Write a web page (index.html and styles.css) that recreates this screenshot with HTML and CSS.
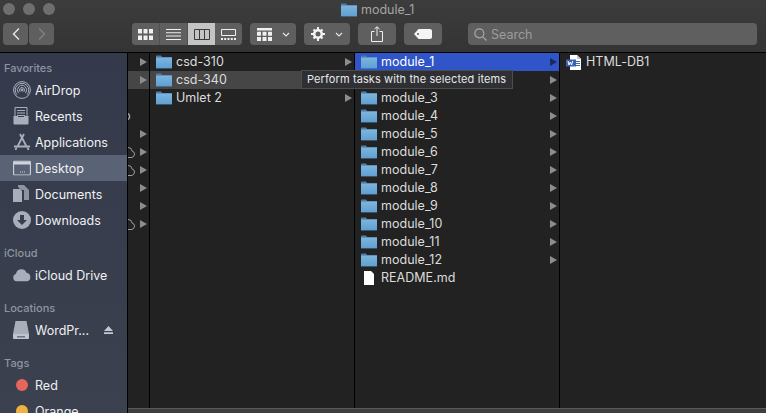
FILE: index.html
```html
<!DOCTYPE html>
<html lang="en">
<head>
    <meta charset="UTF-8">
    <title>module_1</title>
    <link rel="stylesheet" href="styles.css">
</head>
<body>
    <svg class="defs" width="0" height="0">
        <defs>
            <linearGradient id="blue" x1="0" y1="0" x2="0" y2="1">
                <stop offset="0" stop-color="#7db5de"/>
                <stop offset="1" stop-color="#5f9fd2"/>
            </linearGradient>
            <symbol id="folder" viewBox="0 0 16 14">
                <path d="M0 1.200Q0 .4.8.4H5L6.200 2H16V3H0Z" fill="#4c7ea8"/>
                <path d="M0 2.600H16V13.400H0Z" fill="url(#blue)"/>
            </symbol>
            <symbol id="stub-cloud" viewBox="0 0 7 11">
                <path d="M0 .5q4 0 4 3.500 2.500.5 2.500 3T4 10.500H0" fill="none" stroke="#9a9a9a"/>
            </symbol>
        </defs>
    </svg>

    <header class="toolbar">
        <div class="title-row">
            <div class="lights"><i></i><i></i><i></i></div>
            <div class="title">
                <svg class="title-folder" width="16" height="14"><use href="#folder"/></svg>
                <span>module_1</span>
            </div>
        </div>
        <div class="tool-row">
            <div class="nav">
                <button class="btn nav-btn">
                    <svg width="10" height="14" viewBox="0 0 10 14"><path d="M8 1.500 2.500 7 8 12.500" fill="none" stroke="#e4e4e4" stroke-width="1.500"/></svg>
                </button>
                <button class="btn nav-btn">
                    <svg width="10" height="14" viewBox="0 0 10 14"><path d="M2 1.500 7.500 7 2 12.500" fill="none" stroke="#808080" stroke-width="1.500"/></svg>
                </button>
            </div>
            <div class="views">
                <button class="view">
                    <svg width="15" height="11" viewBox="0 0 15 11" fill="#f0f0f0"><path d="M0 0h4v4.500H0zM5.500 0h4v4.500h-4zM11 0h4v4.500h-4zM0 6.500h4V11H0zM5.500 6.500h4V11h-4zM11 6.500h4V11h-4z"/></svg>
                </button>
                <button class="view">
                    <svg width="15" height="11" viewBox="0 0 15 11" fill="#f0f0f0"><path d="M0 0h15v1H0zM0 3.300h15v1H0zM0 6.600h15v1H0zM0 10h15v1H0z"/></svg>
                </button>
                <button class="view view-on">
                    <svg width="16" height="11" viewBox="0 0 16 11" fill="none" stroke="#3a3a3a"><path d="M.5.500h15v10H.5zM5.500.500v10M10.500.500v10"/></svg>
                </button>
                <button class="view">
                    <svg width="15" height="11" viewBox="0 0 15 11"><path d="M.5.500h14v6H.5z" fill="none" stroke="#f0f0f0"/><path d="M0 9h2v2H0zM3.200 9h2v2h-2zM6.500 9h2v2h-2zM9.800 9h2v2h-2zM13 9h2v2h-2z" fill="#f0f0f0"/></svg>
                </button>
            </div>
            <button class="btn drop arrange">
                <svg width="15" height="13" viewBox="0 0 15 13" fill="#f0f0f0"><path d="M0 0h15v2.500H0zM0 3.800h4v4H0zM5.500 3.800h4v4h-4zM11 3.800h4v4h-4zM0 9h4v4H0zM5.500 9h4v4h-4zM11 9h4v4h-4z"/></svg>
                <svg class="caret" width="8" height="5" viewBox="0 0 8 5"><path d="M1 1l3 3 3-3" fill="none" stroke="#e4e4e4" stroke-width="1.200"/></svg>
            </button>
            <button class="btn drop action">
                <svg width="14" height="14" viewBox="0 0 14 14"><circle cx="7" cy="7" r="3.800" fill="none" stroke="#f4f4f4" stroke-width="2.600"/><path d="M6 0h2v3H6zM6 11h2v3H6zM0 6h3v2H0zM11 6h3v2h-3zM1.800 3.200 3.200 1.800 5 3.600 3.600 5zM9 10.400 10.400 9l1.800 1.800-1.400 1.400zM10.800 1.800l1.400 1.400L10.400 5 9 3.600zM3.600 9 5 10.400l-1.800 1.800-1.400-1.400z" fill="#f4f4f4"/><circle cx="7" cy="7" r="2" fill="#5f5f5f"/></svg>
                <svg class="caret" width="8" height="5" viewBox="0 0 8 5"><path d="M1 1l3 3 3-3" fill="none" stroke="#e4e4e4" stroke-width="1.200"/></svg>
            </button>
            <button class="btn share">
                <svg width="12" height="16" viewBox="0 0 12 16" fill="none" stroke="#f0f0f0"><path d="M3.500 5.500H.5v10h11v-10h-3M6 10V.8M3.500 3 6 .8 8.500 3"/></svg>
            </button>
            <button class="btn tag">
                <svg width="18" height="10" viewBox="0 0 18 10"><path d="M4.500 0H16a2 2 0 0 1 2 2v6a2 2 0 0 1-2 2H4.500L0 5Z" fill="#f4f4f4"/><circle cx="4" cy="5" r="1" fill="#5f5f5f"/></svg>
            </button>
            <div class="search">
                <svg width="13" height="13" viewBox="0 0 13 13" fill="none" stroke="#a8a8a8" stroke-width="1.200"><circle cx="5.300" cy="5.300" r="4.500"/><path d="M8.600 8.600 12.500 12.500"/></svg>
                <span>Search</span>
            </div>
        </div>
    </header>

    <div class="body">
        <nav class="sidebar">
            <h4>Favorites</h4>
            <div class="side-item">
                <svg class="side-icon" width="18" height="18" viewBox="0 0 18 18" fill="none" stroke="#a9afba"><circle cx="9" cy="9" r="8.400"/><path d="M3.800 13.500a6.800 6.800 0 1 1 10.400 0M5.500 12a4.600 4.600 0 1 1 7 0M7.200 10.800a2.500 2.500 0 1 1 3.600 0"/><circle cx="9" cy="9" r="1" fill="#a9afba"/></svg>
                <span>AirDrop</span>
            </div>
            <div class="side-item">
                <svg class="side-icon" width="16" height="18" viewBox="0 0 16 18"><path d="M2 .5h12v10H2z" fill="none" stroke="#a9afba"/><path d="M4 3h8v1H4zM4 5.500h8v1H4zM4 8h8v1H4z" fill="#a9afba"/><path d="M.5 9H5v2h6V9h4.500v7.500a1 1 0 0 1-1 1h-13a1 1 0 0 1-1-1z" fill="#a9afba"/></svg>
                <span>Recents</span>
            </div>
            <div class="side-item">
                <svg class="side-icon" width="18" height="18" viewBox="0 0 18 18" fill="none" stroke="#a9afba" stroke-width="1.800"><path d="M7 1 13.500 13.500M11 1 4.500 13.500M1 13.500H17"/><path d="M3.500 14.500 2.500 17M14.500 14.500 15.500 17"/></svg>
                <span>Applications</span>
            </div>
            <div class="side-item side-on">
                <svg class="side-icon" width="18" height="15" viewBox="0 0 18 15"><path d="M.6 1.500q0-1 1-1h14.800q1 0 1 1v12q0 1-1 1H1.600q-1 0-1-1z" fill="none" stroke="#d0d4dc" stroke-width="1.100"/><path d="M1 1h16v3H1z" fill="#d0d4dc"/><path d="M7 11h1v1H7zM9 11h1v1H9zM11 11h1v1h-1z" fill="#d0d4dc"/></svg>
                <span>Desktop</span>
            </div>
            <div class="side-item">
                <svg class="side-icon" width="16" height="18" viewBox="0 0 16 18"><path d="M0 4h7l2 2v11H0z" fill="#a9afba"/><path d="M5 0h6l5 5v10h-5V5H8L5 2z" fill="#8d93a0"/></svg>
                <span>Documents</span>
            </div>
            <div class="side-item">
                <svg class="side-icon" width="18" height="18" viewBox="0 0 18 18"><circle cx="9" cy="9" r="9" fill="#a9afba"/><path d="M7 4h4v5h3l-5 5-5-5h3z" fill="#3a404e"/></svg>
                <span>Downloads</span>
            </div>
            <h4 class="gap">iCloud</h4>
            <div class="side-item">
                <svg class="side-icon" width="18" height="13" viewBox="0 0 18 13"><path d="M4 13a4 4 0 0 1-1-7.800 5.500 5.500 0 0 1 10.500-1A4.500 4.500 0 0 1 14 13z" fill="#a9afba"/></svg>
                <span>iCloud Drive</span>
            </div>
            <h4 class="gap">Locations</h4>
            <div class="side-item">
                <svg class="side-icon" width="16" height="18" viewBox="0 0 16 18"><path d="M2.500 0h11L16 13H0z" fill="#a9afba"/><path d="M0 13h16v4a1 1 0 0 1-1 1H1a1 1 0 0 1-1-1z" fill="#bfc4cd"/><path d="M4 15h8v1.500H4z" fill="#6d7380"/></svg>
                <span>WordPr...</span>
                <svg class="eject" width="9" height="8" viewBox="0 0 9 8" fill="#c3c7cf"><path d="M4.500 0 9 5H0zM0 6.300h9V8H0z"/></svg>
            </div>
            <h4 class="gap">Tags</h4>
            <div class="side-item">
                <i class="tag-dot dot-red"></i>
                <span>Red</span>
            </div>
            <div class="side-item">
                <i class="tag-dot dot-orange"></i>
                <span>Orange</span>
            </div>
        </nav>

        <main class="browser">
            <div class="columns">
                <div class="col col-stub">
                    <div class="row"><b class="arrow"></b></div>
                    <div class="row row-parent"><b class="arrow"></b></div>
                    <div class="row"></div>
                    <div class="row"><span class="stub-p">p</span></div>
                    <div class="row"><b class="arrow"></b></div>
                    <div class="row"><svg class="stub-cloud" width="7" height="11"><use href="#stub-cloud"/></svg><b class="arrow"></b></div>
                    <div class="row"><svg class="stub-cloud" width="7" height="11"><use href="#stub-cloud"/></svg><b class="arrow"></b></div>
                    <div class="row"><b class="arrow"></b></div>
                    <div class="row"><b class="arrow"></b></div>
                    <div class="row"><svg class="stub-cloud" width="7" height="11"><use href="#stub-cloud"/></svg><b class="arrow"></b></div>
                </div>
                <div class="col col-wide">
                    <div class="row"><svg class="row-icon" width="16" height="14"><use href="#folder"/></svg><span>csd-310</span><b class="arrow"></b></div>
                    <div class="row row-parent"><svg class="row-icon" width="16" height="14"><use href="#folder"/></svg><span>csd-340</span><b class="arrow"></b></div>
                    <div class="row"><svg class="row-icon" width="16" height="14"><use href="#folder"/></svg><span>Umlet 2</span><b class="arrow"></b></div>
                </div>
                <div class="col col-wide">
                    <div class="row row-sel"><svg class="row-icon" width="16" height="14"><use href="#folder"/></svg><span>module_1</span><b class="arrow"></b></div>
                    <!-- this row sits under the tooltip -->
                    <div class="row"><b class="arrow"></b></div>
                    <div class="row"><svg class="row-icon" width="16" height="14"><use href="#folder"/></svg><span>module_3</span><b class="arrow"></b></div>
                    <div class="row"><svg class="row-icon" width="16" height="14"><use href="#folder"/></svg><span>module_4</span><b class="arrow"></b></div>
                    <div class="row"><svg class="row-icon" width="16" height="14"><use href="#folder"/></svg><span>module_5</span><b class="arrow"></b></div>
                    <div class="row"><svg class="row-icon" width="16" height="14"><use href="#folder"/></svg><span>module_6</span><b class="arrow"></b></div>
                    <div class="row"><svg class="row-icon" width="16" height="14"><use href="#folder"/></svg><span>module_7</span><b class="arrow"></b></div>
                    <div class="row"><svg class="row-icon" width="16" height="14"><use href="#folder"/></svg><span>module_8</span><b class="arrow"></b></div>
                    <div class="row"><svg class="row-icon" width="16" height="14"><use href="#folder"/></svg><span>module_9</span><b class="arrow"></b></div>
                    <div class="row"><svg class="row-icon" width="16" height="14"><use href="#folder"/></svg><span>module_10</span><b class="arrow"></b></div>
                    <div class="row"><svg class="row-icon" width="16" height="14"><use href="#folder"/></svg><span>module_11</span><b class="arrow"></b></div>
                    <div class="row"><svg class="row-icon" width="16" height="14"><use href="#folder"/></svg><span>module_12</span><b class="arrow"></b></div>
                    <div class="row">
                        <svg class="row-icon" width="16" height="14" viewBox="0 0 16 14"><path d="M3 0h7l3 3v11H3z" fill="#fff"/></svg>
                        <span>README.md</span>
                    </div>
                </div>
                <div class="col col-last">
                    <div class="row">
                        <svg class="row-icon" width="16" height="15" viewBox="0 0 16 15"><path d="M4 0h7l4 4v11H4z" fill="#fff"/><path d="M11 0v4h4z" fill="#c8c8c8"/><path d="M10 6h4v1h-4zM10 8h4v1h-4zM10 10h4v1h-4z" fill="#3f66b8"/><path d="M0 4.500h10v7H0z" fill="#3b62b5"/><path d="M2 6l1 4 1.300-3 1.300 3 1-4" fill="none" stroke="#fff"/></svg>
                        <span>HTML-DB1</span>
                    </div>
                </div>
            </div>
            <div class="status"></div>
        </main>
    </div>

    <div class="tooltip">Perform tasks with the selected items</div>
</body>
</html>
```

FILE: styles.css
```css
* {
    box-sizing: border-box;
}
html, body {
    margin: 0;
    height: 100%;
    overflow: hidden;
}
body {
    width: 766px;
    height: 413px;
    display: flex;
    flex-direction: column;
    position: relative;
    background-color: #222;
    color: #dcdcdc;
    font-family: Inter, "Noto Sans", sans-serif;
    font-size: 12.5px;
}
.defs {
    position: absolute;
}
button {
    border: none;
    padding: 0;
    font: inherit;
}

/* toolbar */
.toolbar {
    height: 53px;
    flex: none;
    background: linear-gradient(#3c3c3c, #343434);
    border-bottom: 1px solid #000;
}
.title-row {
    height: 23px;
    position: relative;
}
.lights {
    display: flex;
    gap: 8px;
    padding: 3px 0 0 3px;
}
.lights i {
    width: 12px;
    height: 12px;
    border-radius: 50%;
    background-color: #6e6e6e;
}
.title {
    position: absolute;
    left: 341px;
    top: 2px;
    display: flex;
    align-items: center;
    gap: 4px;
    font-size: 12.5px;
    color: #a4a4a4;
}
.tool-row {
    height: 22px;
    display: flex;
    padding-left: 3px;
}
.btn {
    height: 22px;
    display: flex;
    align-items: center;
    justify-content: center;
    background-color: #5f5f5f;
    border-radius: 4px;
}
.nav {
    display: flex;
    gap: 1px;
    width: 129px;
}
.nav-btn {
    width: 25px;
}
.views {
    display: flex;
    height: 22px;
    width: 110px;
    border-radius: 4px;
    overflow: hidden;
    background-color: #5f5f5f;
}
.view {
    width: 28px;
    display: flex;
    align-items: center;
    justify-content: center;
    background-color: #5f5f5f;
    border-right: 1px solid #505050;
}
.view:last-child {
    border-right: none;
    width: 27px;
}
.view-on {
    width: 27px;
    background-color: #c4c4c4;
    border-right: none;
}
.drop {
    width: 46px;
    gap: 10px;
}
.arrange {
    margin-left: 8px;
}
.action {
    margin-left: 8px;
}
.caret {
    flex: none;
}
.share {
    width: 38px;
    margin-left: 8px;
}
.tag {
    width: 38px;
    margin-left: 8px;
}
.search {
    width: 289px;
    height: 22px;
    margin-left: 26px;
    padding-left: 6px;
    display: flex;
    align-items: center;
    gap: 4px;
    background-color: #5f5f5f;
    border-radius: 4px;
    color: #9c9c9c;
}

/* layout */
.body {
    flex: 1;
    display: flex;
    min-height: 0;
}
.sidebar {
    width: 128px;
    flex: none;
    padding: 6px 0 0;
    overflow: hidden;
    background: linear-gradient(#343a4b, #3b414e);
    border-right: 1px solid #000;
}
.sidebar h4 {
    margin: 0;
    height: 18px;
    line-height: 18px;
    padding-left: 4px;
    font-size: 11px;
    font-weight: 500;
    color: #8f95a1;
}
.sidebar h4.gap {
    margin-top: 11px;
}
.side-item {
    height: 26px;
    display: flex;
    align-items: center;
    color: #f0f0f2;
    position: relative;
}
.side-icon {
    position: absolute;
    left: 13px;
    top: 50%;
    transform: translateY(-50%);
}
.side-item span {
    margin-left: 35px;
}
.side-on {
    background-color: #5a6275;
}
.eject {
    margin-left: 15px;
}
.tag-dot {
    position: absolute;
    left: 16px;
    width: 12px;
    height: 12px;
    border-radius: 50%;
}
.dot-red {
    background-color: #e8655e;
}
.dot-orange {
    background-color: #f0b140;
}

/* column browser */
.browser {
    flex: 1;
    min-width: 0;
    display: flex;
    flex-direction: column;
}
.columns {
    flex: 1;
    display: flex;
    min-height: 0;
}
.col {
    background-color: #222;
    border-right: 1px solid #000;
    overflow: hidden;
}
.col-stub {
    width: 22px;
}
.col-wide {
    width: 205px;
}
.col-last {
    flex: 1;
    border-right: none;
}
.row {
    height: 18px;
    display: flex;
    align-items: center;
    position: relative;
}
.row span {
    margin-bottom: 2px;
    letter-spacing: 0.02px;
}
.row-parent {
    background-color: #464646;
}
.row-sel {
    background-color: #2f55c8;
    color: #fff;
}
.row-icon {
    flex: none;
    margin: 0 4px 0 6px;
}
.arrow {
    position: absolute;
    right: 2px;
    top: 5px;
    width: 0;
    height: 0;
    border-left: 7px solid #8d8d8d;
    border-top: 4px solid transparent;
    border-bottom: 4px solid transparent;
}
.row-sel .arrow {
    border-left-color: #1b2a5c;
}
.stub-p {
    margin-left: -5px;
    color: #bdbdbd;
}
.stub-cloud {
    flex: none;
}
.status {
    height: 5px;
    flex: none;
    background-color: #3e3e3e;
    border-top: 1px solid #5a5a5a;
}
.tooltip {
    position: absolute;
    left: 301px;
    top: 70px;
    width: 212px;
    height: 19px;
    padding-left: 5px;
    line-height: 17px;
    font-size: 11px;
    letter-spacing: 0.1px;
    color: #e8e8e8;
    white-space: nowrap;
    background-color: #2e3033;
    border: 1px solid #4c4c4c;
}
```
